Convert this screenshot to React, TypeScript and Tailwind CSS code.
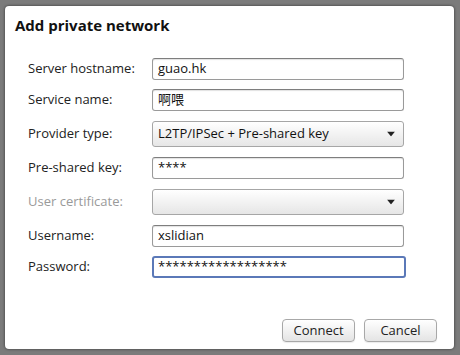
const font = { fontFamily: '"Open Sans", "Noto Sans CJK SC", sans-serif' };

const Arrow = () => (
  <svg width="8" height="5" viewBox="0 0 8 5" className="absolute right-[8px] top-1/2 -translate-y-1/2">
    <path d="M0 0 H8 L4 5 Z" fill="#222" />
  </svg>
);

const TextField = ({ value, focused }: { value: string; focused?: boolean }) => (
  <div
    className={
      focused
        ? "h-[22px] w-[254px] rounded-[3px] border-2 border-[#5b79b8] bg-white pl-[4px] flex items-center text-[13px] text-[#111]"
        : "h-[22px] w-[252px] rounded-[3px] border border-[#9a9a9a] border-t-[#7e7e7e] bg-white pl-[5px] flex items-center text-[13px] text-[#111] shadow-[inset_0_1px_1px_rgba(0,0,0,0.12)]"
    }
  >
    {value}
  </div>
);

const SelectField = ({ value }: { value: string }) => (
  <div className="relative h-[26px] w-[252px] rounded-[3px] border border-[#a6a6a6] bg-gradient-to-b from-white to-[#e6e6e6] pl-[5px] flex items-center text-[13px] text-[#111]">
    {value}
    <Arrow />
  </div>
);

const Row = ({ label, dim, tall, children }: { label: string; dim?: boolean; tall?: boolean; children: React.ReactNode }) => (
  <div className={tall ? "flex items-center h-[37px]" : "flex items-center h-[31px]"}>
    <div className={dim ? "w-[124px] text-[13px] text-[#9a9a9a]" : "w-[124px] text-[13px] text-[#222]"}>{label}</div>
    {children}
  </div>
);

const Button = ({ children, w }: { children: React.ReactNode; w: string }) => (
  <div className={`${w} h-[23px] rounded-[4px] border border-[#a8a8a8] bg-gradient-to-b from-white to-[#e4e4e4] flex items-center justify-center text-[13px] text-[#222] shadow-[0_1px_1px_rgba(0,0,0,0.08)]`}>
    {children}
  </div>
);

export default function App() {
  return (
    <div className="w-[460px] h-[355px] bg-[#7b7b7b] pt-[6px] pl-[5px]" style={font}>
      <div className="w-[449px] h-[343px] bg-white rounded-[4px] shadow-[0_0_3px_rgba(0,0,0,0.6)] flex flex-col">
        <div className="pl-[10px] pt-[8px] text-[15px] font-bold text-[#111]">Add private network</div>
        <div className="pl-[23px] pt-[17px] flex flex-col">
          <Row label="Server hostname:"><TextField value="guao.hk" /></Row>
          <Row label="Service name:"><TextField value="啊喂" /></Row>
          <Row label="Provider type:" tall><SelectField value="L2TP/IPSec + Pre-shared key" /></Row>
          <Row label="Pre-shared key:"><TextField value="****" /></Row>
          <Row label="User certificate:" dim tall><SelectField value="" /></Row>
          <Row label="Username:"><TextField value="xslidian" /></Row>
          <Row label="Password:"><TextField value="******************" focused /></Row>
        </div>
        <div className="flex justify-end gap-[9px] pr-[17px] mt-auto mb-[7px]">
          <Button w="w-[73px]">Connect</Button>
          <Button w="w-[73px]">Cancel</Button>
        </div>
      </div>
    </div>
  );
}
